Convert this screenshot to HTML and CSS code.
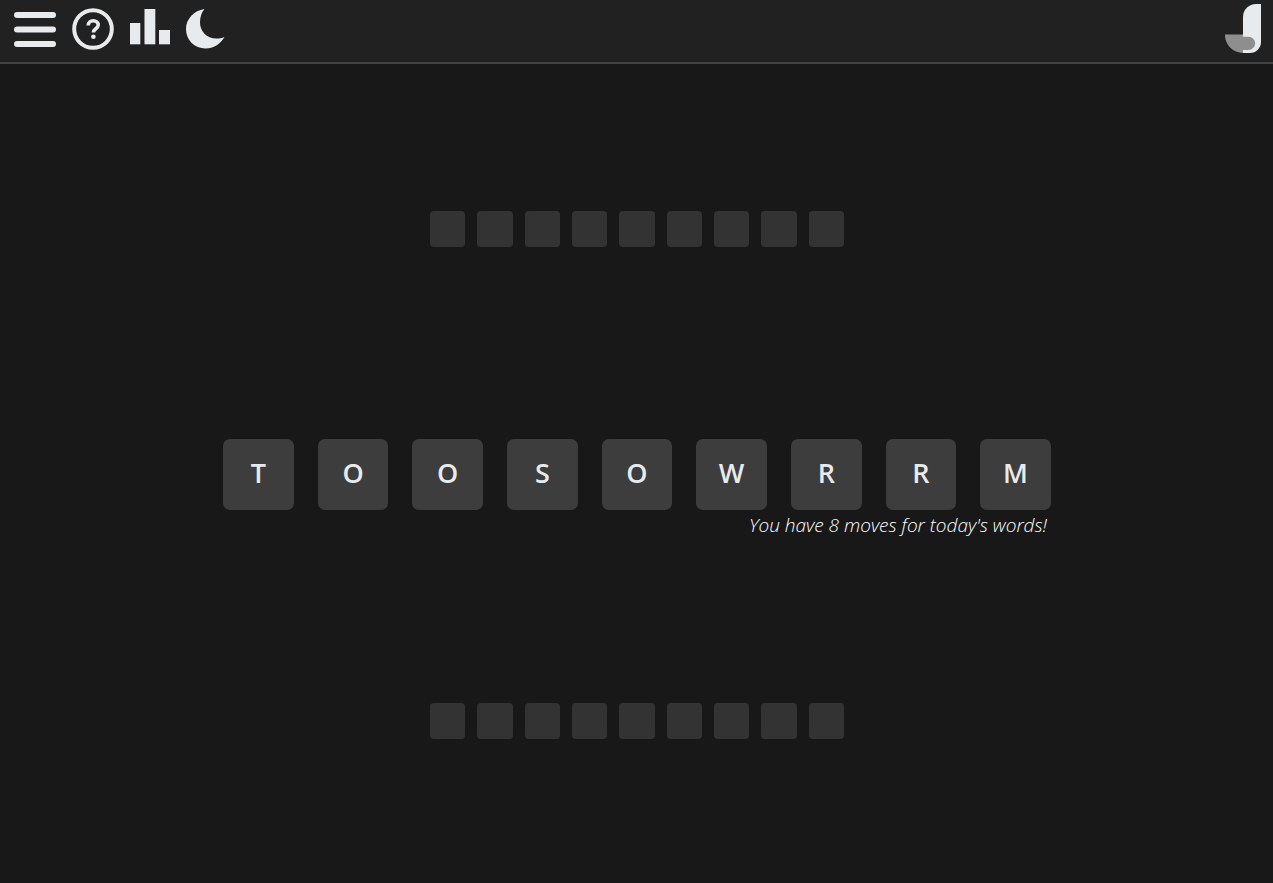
FILE: index.html
```html
<!DOCTYPE html>
<html lang="en">
<head>
  <meta charset="UTF-8" />
  <meta name="viewport" content="width=device-width, initial-scale=1.0" />
  <title>Word game</title>
  <link rel="stylesheet" href="styles.css">
</head>
<body>
  <header class="topbar">
    <div class="topbar-icons">
      <svg class="icon icon-menu" width="42" height="35" viewBox="0 0 42 35">
        <rect x="0" y="0" width="42" height="6" rx="3" />
        <rect x="0" y="14.5" width="42" height="6" rx="3" />
        <rect x="0" y="29" width="42" height="6" rx="3" />
      </svg>
      <svg class="icon icon-help" width="42" height="42" viewBox="0 0 42 42">
        <circle cx="21" cy="21" r="18.8" fill="none" stroke="#e8ebed" stroke-width="4" />
        <path d="M16.2 17.6c0-3 2.200-4.800 5-4.800s5 1.700 5 4.300c0 3.800-4.800 3.600-4.800 7.400" fill="none" stroke="#e8ebed" stroke-width="3.600" />
        <circle cx="21.400" cy="28.700" r="2.300" />
      </svg>
      <svg class="icon icon-stats" width="40" height="36" viewBox="0 0 40 36">
        <rect x="0" y="14" width="10.300" height="21.300" />
        <rect x="14.500" y="0" width="10.800" height="35.300" />
        <rect x="29" y="21" width="11" height="14.300" />
      </svg>
      <svg class="icon icon-moon" width="40" height="41" viewBox="0 0 40 41">
        <path d="M18.500 0C8 1.500 0 10 0 20C0 31 8.500 39.500 19.500 39.500C27.500 39.500 34.500 35 38.500 28C36 29 33 29.500 30.500 29.500C20.500 29.500 14 22 14 13.500C14 8 15.500 3.500 18.500 0Z" />
      </svg>
    </div>
    <svg class="logo" width="38" height="50" viewBox="0 0 38 50">
      <path fill="#8e8e8e" d="M0 30.500H18V49A18 18 0 0 1 0 30.500Z" />
      <path fill="#e8ebed" d="M36 0V38A11 11 0 0 1 25 49H18V13A13 13 0 0 1 31 0Z" />
      <path fill="#8e8e8e" d="M18 32.700H23.500A6.650 6.650 0 0 1 23.500 46H18Z" />
    </svg>
  </header>

  <main class="board">
    <div class="tiles tiles-small">
      <div class="tile"></div><div class="tile"></div><div class="tile"></div>
      <div class="tile"></div><div class="tile"></div><div class="tile"></div>
      <div class="tile"></div><div class="tile"></div><div class="tile"></div>
    </div>

    <div class="scramble">
      <div class="tiles tiles-large">
        <div class="tile">T</div><div class="tile">O</div><div class="tile">O</div>
        <div class="tile">S</div><div class="tile">O</div><div class="tile">W</div>
        <div class="tile">R</div><div class="tile">R</div><div class="tile">M</div>
      </div>
      <p class="moves">You have 8 moves for today's words!</p>
    </div>

    <div class="tiles tiles-small">
      <div class="tile"></div><div class="tile"></div><div class="tile"></div>
      <div class="tile"></div><div class="tile"></div><div class="tile"></div>
      <div class="tile"></div><div class="tile"></div><div class="tile"></div>
    </div>
  </main>
</body>
</html>
```

FILE: styles.css
```css
* { box-sizing: border-box; margin: 0; padding: 0; }
body { background: #181818; color: #e8ebed; font-family: 'Open Sans', sans-serif; height: 883px; overflow: hidden; }

.topbar { height: 64px; background: #212121; border-bottom: 2px solid #424242; display: flex; align-items: flex-start; justify-content: space-between; padding: 0 10px 0 14px; }
.topbar-icons { display: flex; align-items: flex-start; }
.icon { display: block; fill: #e8ebed; flex-shrink: 0; }
.icon-menu { margin-top: 12px; }
.icon-help { margin: 8px 0 0 16px; }
.icon-stats { margin: 9px 0 0 16px; }
.icon-moon { margin: 9px 0 0 16px; }
.logo { display: block; margin-top: 4px; }

.board { display: flex; flex-direction: column; align-items: center; padding-top: 147px; }
.tiles { display: flex; justify-content: space-between; }
.tile { display: flex; align-items: center; justify-content: center; }

.tiles-small { width: 413.925px; margin-left: 1.12px; }
.tiles-small .tile { width: 35.325px; height: 35.5px; background: #333333; border-radius: 4px; }

.scramble { width: 827.85px; margin: 192.5px 0 164.85px 1.05px; }
.tiles-large .tile { width: 70.65px; height: 70.65px; background: #3d3d3d; border-radius: 7px; font-size: 27px; font-weight: 600; padding-bottom: 4px; }

.moves { height: 29px; padding: 2px 4px 0 0; text-align: right; font-size: 19px; font-style: italic; font-weight: 300; line-height: 26px; color: #ffffff; }
```
